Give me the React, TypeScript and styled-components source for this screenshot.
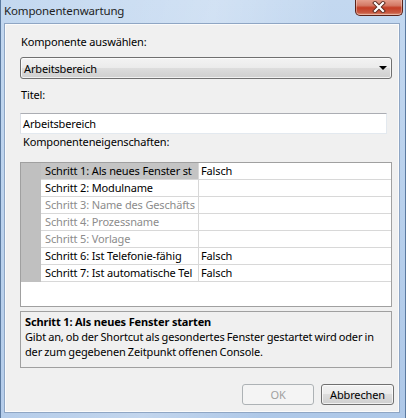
import React from 'react';
import styled, { createGlobalStyle } from 'styled-components';

const Global = createGlobalStyle`
  html, body { margin: 0; padding: 0; }
  body {
    width: 406px; height: 418px; overflow: hidden;
    font-family: "Noto Sans", "Open Sans", sans-serif;
    font-size: 11px;
    color: #000;
  }
  * { box-sizing: border-box; }
`;

const Window = styled.div`
  width: 406px;
  height: 418px;
  display: flex;
  flex-direction: column;
  padding: 0 5px 5px 3px;
  background:
    linear-gradient(100deg, rgba(255,255,255,0) 0%, rgba(255,255,255,0.25) 45%, rgba(255,255,255,0) 70%),
    linear-gradient(180deg, #c3d8f0 0%, #b8d0ec 50%, #aec8e8 100%);
  border-left: 1px solid #5b7aa0;
  border-right: 1px solid #5b7aa0;
`;

const TitleBar = styled.div`
  height: 23px;
  display: flex;
  align-items: flex-start;
  justify-content: space-between;
`;

const TitleText = styled.div`
  font-size: 11.5px;
  letter-spacing: -0.15px;
  line-height: 22px;
  color: #1e1e1e;
`;

const CloseButton = styled.div`
  width: 48px;
  height: 17px;
  margin-right: -3px;
  margin-top: -1px;
  border: 1px solid #5a2218;
  border-top: none;
  border-radius: 0 0 5px 5px;
  background: linear-gradient(180deg, #e8a493 0%, #d47a66 40%, #c43d25 55%, #c85a42 85%, #e09a80 100%);
  box-shadow: inset 0 0 0 1px rgba(255,255,255,0.35);
  display: flex;
  align-items: center;
  justify-content: center;
`;

const Client = styled.div`
  flex: 1;
  display: flex;
  flex-direction: column;
  background: #f0f0f0;
  border: 1px solid #8fa6c4;
  box-shadow: inset 0 0 0 1px #fbfbfb;
  padding: 0 0 0 15px;
  letter-spacing: -0.15px;
`;

const Label = styled.div<{ $mt: number; $ml?: number }>`
  margin-top: ${p => p.$mt}px;
  margin-left: ${p => p.$ml ?? 1}px;
  line-height: 16px;
  height: 16px;
  white-space: nowrap;
`;

const Select = styled.div`
  margin-top: 7px;
  width: 372px;
  height: 22px;
  border: 1px solid #707070;
  border-radius: 3px;
  background: linear-gradient(180deg, #f3f3f3 0%, #ebebeb 49%, #dddddd 50%, #cfcfcf 100%);
  box-shadow: inset 0 0 0 1px rgba(255,255,255,0.7);
  display: flex;
  align-items: center;
  justify-content: space-between;
  padding: 0 4px 0 3px;
`;

const Arrow = styled.div`
  width: 0; height: 0;
  border-left: 4px solid transparent;
  border-right: 4px solid transparent;
  border-top: 4px solid #000;
`;

const TextInput = styled.div`
  margin-top: 10px;
  width: 367px;
  height: 21px;
  background: #fff;
  border: 1px solid #e3e9ef;
  border-top-color: #abadb3;
  border-left-color: #dbdfe6;
  display: flex;
  align-items: center;
  padding-left: 2px;
`;

const Grid = styled.div`
  margin-top: 12px;
  width: 372px;
  height: 145px;
  border: 1px solid #a0a0a0;
  background: #fff;
  display: flex;
  flex-direction: column;
`;

const Row = styled.div`
  display: grid;
  grid-template-columns: 20px 158px 1fr;
  height: 17px;
`;

const Gutter = styled.div`
  background: #c0c0c0;
`;

const NameCell = styled.div<{ $selected?: boolean; $disabled?: boolean }>`
  background: ${p => (p.$selected ? '#c4c4c4' : '#fff')};
  color: ${p => (p.$disabled ? '#8c8c8c' : '#000')};
  border-bottom: 1px solid #d8d8d8;
  border-right: 1px solid #d8d8d8;
  padding-left: 4px;
  line-height: 16px;
  white-space: nowrap;
  overflow: hidden;
`;

const ValueCell = styled.div`
  border-bottom: 1px solid #d8d8d8;
  padding-left: 2px;
  line-height: 16px;
  white-space: nowrap;
  overflow: hidden;
`;

const Filler = styled.div`
  flex: 1;
`;

const Desc = styled.div`
  margin-top: 4px;
  width: 372px;
  height: 57px;
  border: 1px solid #a0a0a0;
  background: #f0f0f0;
  padding: 2px 4px 0 4px;
  line-height: 15px;
`;

const DescTitle = styled.div`
  font-weight: bold;
  white-space: nowrap;
`;

const DescLine = styled.div`
  white-space: nowrap;
  word-spacing: -0.5px;
`;

const ButtonRow = styled.div`
  margin-top: 16px;
  width: 374px;
  display: flex;
  justify-content: flex-end;
  gap: 7px;
`;

const Button = styled.div<{ $disabled?: boolean; $w: number }>`
  width: ${p => p.$w}px;
  height: 21px;
  border-radius: 3px;
  border: 1px solid ${p => (p.$disabled ? '#adb2b5' : '#707070')};
  background: ${p =>
    p.$disabled
      ? '#f4f4f4'
      : 'linear-gradient(180deg, #f2f2f2 0%, #ebebeb 49%, #dddddd 50%, #cfcfcf 100%)'};
  box-shadow: ${p => (p.$disabled ? 'none' : 'inset 0 0 0 1px rgba(255,255,255,0.7)')};
  color: ${p => (p.$disabled ? '#a0a0a0' : '#000')};
  display: flex;
  align-items: center;
  justify-content: center;
`;

type Prop = { name: string; value: string; disabled?: boolean; selected?: boolean };

const props: Prop[] = [
  { name: 'Schritt 1: Als neues Fenster st', value: 'Falsch', selected: true },
  { name: 'Schritt 2: Modulname', value: '' },
  { name: 'Schritt 3: Name des Geschäfts', value: '', disabled: true },
  { name: 'Schritt 4: Prozessname', value: '', disabled: true },
  { name: 'Schritt 5: Vorlage', value: '', disabled: true },
  { name: 'Schritt 6: Ist Telefonie-fähig', value: 'Falsch' },
  { name: 'Schritt 7: Ist automatische Tel', value: 'Falsch' },
];

export default function App() {
  return (
    <>
      <Global />
      <Window>
        <TitleBar>
          <TitleText>Komponentenwartung</TitleText>
          <CloseButton>
            <svg width="14" height="12" viewBox="0 0 14 12">
              <path d="M3 2 L11 10 M11 2 L3 10" stroke="#5a2a20" strokeWidth="4" strokeLinecap="square" />
              <path d="M3 2 L11 10 M11 2 L3 10" stroke="#ffffff" strokeWidth="2.2" strokeLinecap="square" />
            </svg>
          </CloseButton>
        </TitleBar>
        <Client>
          <Label $mt={10} $ml={1}>Komponente auswählen:</Label>
          <Select>
            <span>Arbeitsbereich</span>
            <Arrow />
          </Select>
          <Label $mt={8} $ml={1}>Titel:</Label>
          <TextInput>Arbeitsbereich</TextInput>
          <Label $mt={0} $ml={3}>Komponenteneigenschaften:</Label>
          <Grid>
            {props.map(p => (
              <Row key={p.name}>
                <Gutter />
                <NameCell $selected={p.selected} $disabled={p.disabled}>{p.name}</NameCell>
                <ValueCell>{p.value}</ValueCell>
              </Row>
            ))}
            <Filler />
          </Grid>
          <Desc>
            <DescTitle>Schritt 1: Als neues Fenster starten</DescTitle>
            <DescLine>Gibt an, ob der Shortcut als gesondertes Fenster gestartet wird oder in</DescLine>
            <DescLine>der zum gegebenen Zeitpunkt offenen Console.</DescLine>
          </Desc>
          <ButtonRow>
            <Button $disabled $w={72}>OK</Button>
            <Button $w={73}>Abbrechen</Button>
          </ButtonRow>
        </Client>
      </Window>
    </>
  );
}
